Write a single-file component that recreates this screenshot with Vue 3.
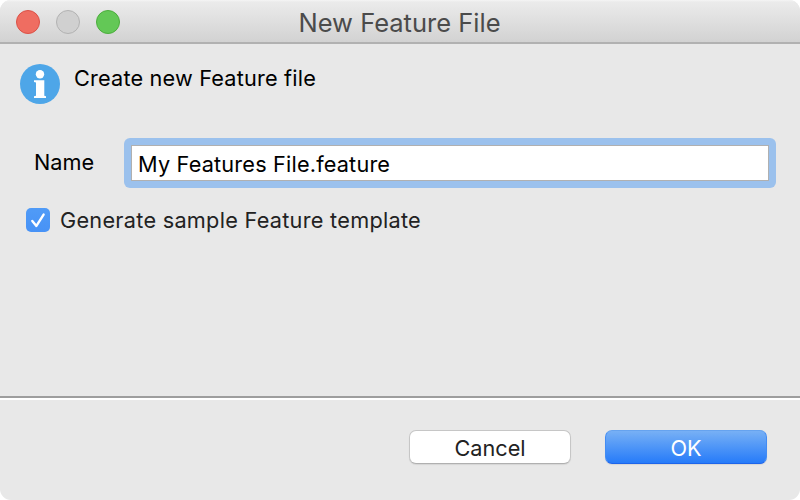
<script setup>
import { ref } from 'vue'

const fileName = ref('My Features File.feature')
const withSample = ref(true)
</script>

<template>
  <div class="dialog">
    <header class="titlebar">
      <div class="lights">
        <i class="light close"></i>
        <i class="light minimize"></i>
        <i class="light expand"></i>
      </div>
      <h1 class="title">New Feature File</h1>
    </header>
    <main class="body">
      <div class="intro">
        <svg class="info" viewBox="0 0 40 40">
          <circle cx="20" cy="20" r="20" fill="#4ea6e8" />
          <circle cx="20" cy="10.2" r="4.2" fill="#fff" />
          <path d="M14 16.2H24.3V31.8L26 32.2V34H14V32.2L16 31.8V18.4L14 18Z" fill="#fff" />
        </svg>
        <span class="headline">Create new Feature file</span>
      </div>
      <div class="field">
        <label class="label" for="name">Name</label>
        <div class="focus-ring">
          <input id="name" v-model="fileName" class="input" type="text" spellcheck="false" />
        </div>
      </div>
      <div class="option" @click="withSample = !withSample">
        <span class="check">
          <svg v-if="withSample" viewBox="0 0 24 24">
            <path d="M6.3 13L10.4 17.9L17.6 6.6" fill="none" stroke="#fff" stroke-width="2.4" stroke-linecap="round" stroke-linejoin="round" />
          </svg>
        </span>
        <span class="option-text">Generate sample Feature template</span>
      </div>
    </main>
    <footer class="footer">
      <button class="btn cancel">Cancel</button>
      <button class="btn ok">OK</button>
    </footer>
  </div>
</template>

<style>
body {
  background: #fff;
  overflow: hidden;
}
</style>

<style scoped>
.dialog {
  box-sizing: border-box;
  width: 800px;
  height: 500px;
  display: flex;
  flex-direction: column;
  overflow: hidden;
  border-radius: 11px;
  background: #e8e8e8;
  color: #000;
  font-family: Inter, "Liberation Sans", sans-serif;
  font-size: 21.7px;
  line-height: 28px;
  white-space: nowrap;
}
.titlebar {
  box-sizing: border-box;
  height: 44px;
  display: grid;
  grid-template-columns: 150px 1fr 150px;
  align-items: center;
  border-bottom: 2px solid #b1b1b1;
  background: linear-gradient(#f5f5f5 0, #ebebeb 2px, #d2d2d2 100%);
}
.lights {
  display: flex;
  gap: 16px;
  padding: 2px 0 0 16px;
}
.light {
  box-sizing: border-box;
  width: 24px;
  height: 24px;
  border-radius: 50%;
  border: 1px solid;
}
.close {
  background: #ef6d61;
  border-color: #db5147;
}
.minimize {
  background: #d0d0d0;
  border-color: #b2b2b2;
}
.expand {
  background: #63c856;
  border-color: #4bad3c;
}
.title {
  margin: 0;
  padding: 3px 1px 0 0;
  text-align: center;
  font-size: 25.5px;
  font-weight: 400;
  line-height: 30px;
  color: #4b4b4b;
}
.body {
  flex: 1;
}
.intro {
  display: flex;
  padding: 20px 0 0 20px;
  gap: 14px;
}
.info {
  width: 40px;
  height: 40px;
}
.headline {
  letter-spacing: 0.18px;
}
.field {
  display: flex;
  align-items: center;
  padding: 34px 24px 0 34px;
}
.label {
  width: 90px;
  padding-bottom: 2px;
}
.focus-ring {
  box-sizing: border-box;
  flex: 1;
  display: flex;
  height: 50px;
  padding: 7px;
  border-radius: 6px;
  background: #9bc1ed;
}
.input {
  box-sizing: border-box;
  flex: 1;
  min-width: 0;
  height: 36px;
  margin: 0;
  padding: 2px 6px 0;
  border: 1px solid #b0b0b0;
  border-radius: 0;
  outline: none;
  background: #fff;
  color: #000;
  font: inherit;
  letter-spacing: 0.18px;
}
.option {
  display: flex;
  align-items: center;
  gap: 10px;
  padding: 18px 0 0 26px;
  color: #222;
}
.option-text {
  letter-spacing: 0.27px;
}
.check {
  width: 24px;
  height: 24px;
  border-radius: 5px;
  background: linear-gradient(#509bf7, #4792f6);
}
.check svg {
  display: block;
}
.footer {
  box-sizing: border-box;
  height: 104px;
  display: flex;
  justify-content: flex-end;
  gap: 34px;
  padding: 30px 33px 0 0;
  border-top: 2px solid #9d9d9d;
  box-shadow: inset 0 2px #fff;
}
.btn {
  box-sizing: border-box;
  width: 162px;
  height: 34px;
  margin: 2px 0 0;
  padding: 2px 0 0;
  border: 1px solid #c6c6c6;
  border-bottom-color: #b0b0b0;
  border-radius: 7px;
  background: #fff;
  box-shadow: 0 1px 1px rgba(0, 0, 0, 0.08);
  color: #222;
  font: inherit;
}
.ok {
  border-color: #66a3ef #438cf3 #1d64ea;
  background: linear-gradient(#77b0f5, #267bf9);
  color: #fff;
}
</style>
